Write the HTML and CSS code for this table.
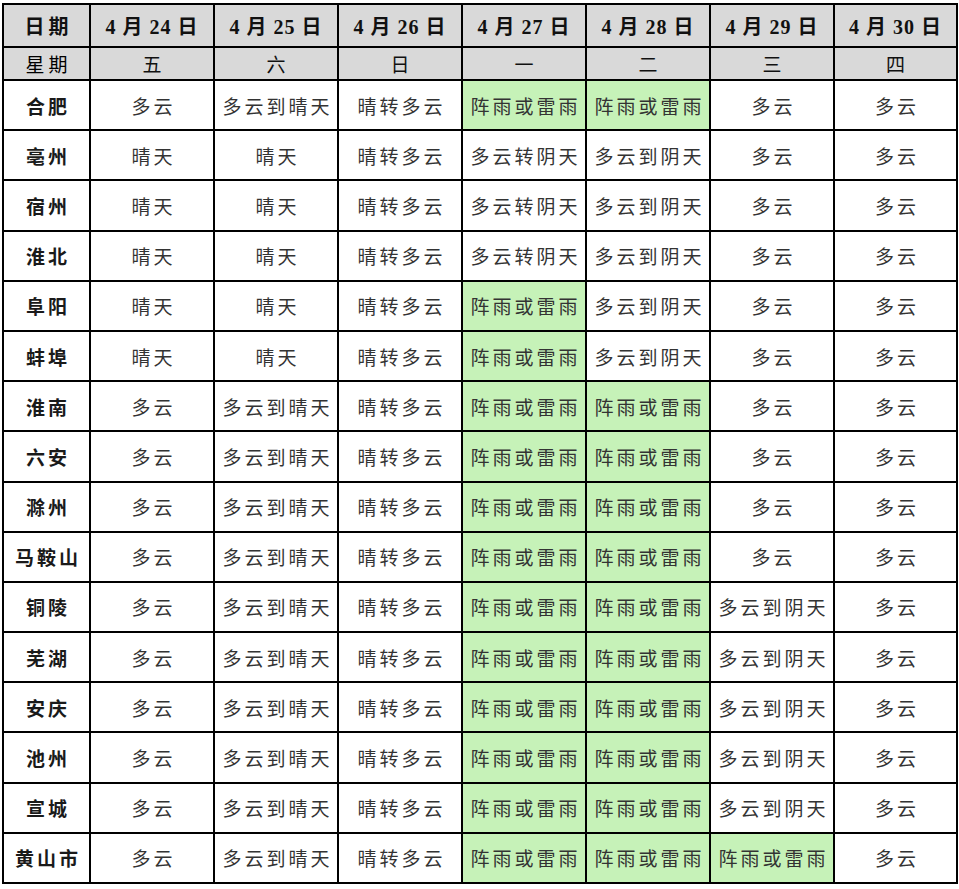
FILE: index.html
```html
<!DOCTYPE html>
<html lang="zh-CN">
<head>
<meta charset="utf-8">
<link rel="stylesheet" href="styles.css">
</head>
<body>
<table class="wx">
<colgroup>
<col class="c-city"><col class="c-day"><col class="c-day"><col class="c-day"><col class="c-day"><col class="c-day"><col class="c-day"><col class="c-last">
</colgroup>
<thead>
<tr class="h1"><th>日期</th><th>4 月 24 日</th><th>4 月 25 日</th><th>4 月 26 日</th><th>4 月 27 日</th><th>4 月 28 日</th><th>4 月 29 日</th><th>4 月 30 日</th></tr>
<tr class="h2"><th>星期</th><th>五</th><th>六</th><th>日</th><th>一</th><th>二</th><th>三</th><th>四</th></tr>
</thead>
<tbody>
<tr><th>合肥</th><td>多云</td><td>多云到晴天</td><td>晴转多云</td><td class="g">阵雨或雷雨</td><td class="g">阵雨或雷雨</td><td>多云</td><td>多云</td></tr>
<tr><th>亳州</th><td>晴天</td><td>晴天</td><td>晴转多云</td><td>多云转阴天</td><td>多云到阴天</td><td>多云</td><td>多云</td></tr>
<tr><th>宿州</th><td>晴天</td><td>晴天</td><td>晴转多云</td><td>多云转阴天</td><td>多云到阴天</td><td>多云</td><td>多云</td></tr>
<tr><th>淮北</th><td>晴天</td><td>晴天</td><td>晴转多云</td><td>多云转阴天</td><td>多云到阴天</td><td>多云</td><td>多云</td></tr>
<tr><th>阜阳</th><td>晴天</td><td>晴天</td><td>晴转多云</td><td class="g">阵雨或雷雨</td><td>多云到阴天</td><td>多云</td><td>多云</td></tr>
<tr><th>蚌埠</th><td>晴天</td><td>晴天</td><td>晴转多云</td><td class="g">阵雨或雷雨</td><td>多云到阴天</td><td>多云</td><td>多云</td></tr>
<tr><th>淮南</th><td>多云</td><td>多云到晴天</td><td>晴转多云</td><td class="g">阵雨或雷雨</td><td class="g">阵雨或雷雨</td><td>多云</td><td>多云</td></tr>
<tr><th>六安</th><td>多云</td><td>多云到晴天</td><td>晴转多云</td><td class="g">阵雨或雷雨</td><td class="g">阵雨或雷雨</td><td>多云</td><td>多云</td></tr>
<tr><th>滁州</th><td>多云</td><td>多云到晴天</td><td>晴转多云</td><td class="g">阵雨或雷雨</td><td class="g">阵雨或雷雨</td><td>多云</td><td>多云</td></tr>
<tr><th>马鞍山</th><td>多云</td><td>多云到晴天</td><td>晴转多云</td><td class="g">阵雨或雷雨</td><td class="g">阵雨或雷雨</td><td>多云</td><td>多云</td></tr>
<tr><th>铜陵</th><td>多云</td><td>多云到晴天</td><td>晴转多云</td><td class="g">阵雨或雷雨</td><td class="g">阵雨或雷雨</td><td>多云到阴天</td><td>多云</td></tr>
<tr><th>芜湖</th><td>多云</td><td>多云到晴天</td><td>晴转多云</td><td class="g">阵雨或雷雨</td><td class="g">阵雨或雷雨</td><td>多云到阴天</td><td>多云</td></tr>
<tr><th>安庆</th><td>多云</td><td>多云到晴天</td><td>晴转多云</td><td class="g">阵雨或雷雨</td><td class="g">阵雨或雷雨</td><td>多云到阴天</td><td>多云</td></tr>
<tr><th>池州</th><td>多云</td><td>多云到晴天</td><td>晴转多云</td><td class="g">阵雨或雷雨</td><td class="g">阵雨或雷雨</td><td>多云到阴天</td><td>多云</td></tr>
<tr><th>宣城</th><td>多云</td><td>多云到晴天</td><td>晴转多云</td><td class="g">阵雨或雷雨</td><td class="g">阵雨或雷雨</td><td>多云到阴天</td><td>多云</td></tr>
<tr><th>黄山市</th><td>多云</td><td>多云到晴天</td><td>晴转多云</td><td class="g">阵雨或雷雨</td><td class="g">阵雨或雷雨</td><td class="g">阵雨或雷雨</td><td>多云</td></tr>
</tbody>
</table>
</body>
</html>
```

FILE: styles.css
```css
html, body {
  margin: 0;
  padding: 0;
  background: #ffffff;
}
body {
  padding: 3px 0 0 2px;
  font-family: "Liberation Serif", "Noto Sans CJK SC", serif;
}
.wx {
  border-collapse: collapse;
  table-layout: fixed;
  width: 954px;
}
.c-city { width: 87px; }
.c-day { width: 124px; }
.c-last { width: 123px; }
.wx th, .wx td {
  border: 2px solid #000;
  padding: 0;
  text-align: center;
  vertical-align: middle;
  white-space: nowrap;
  overflow: hidden;
}
.wx thead th {
  background: #d9d9d9;
  color: #111;
}
.h1 th {
  height: 41px;
  font-size: 20px;
  font-weight: bold;
  letter-spacing: 1px;
  font-family: "Liberation Serif", "Noto Sans CJK SC", serif;
}
.h1 th:first-child,
.h2 th:first-child {
  letter-spacing: 4px;
  padding-left: 4px;
  font-family: "Noto Sans CJK SC", sans-serif;
}
.h2 th {
  height: 31px;
  font-size: 19px;
  font-weight: normal;
  font-family: "Noto Sans CJK SC", sans-serif;
}
.h2 th:first-child { color: #000; }
.h1 th:first-child { font-weight: bold; }
.wx tbody th {
  height: 48.2px;
  font-size: 19px;
  font-weight: bold;
  letter-spacing: 3px;
  padding-left: 3px;
  color: #1a1a1a;
  font-family: "Noto Sans CJK SC", sans-serif;
}
.wx tbody td {
  height: 48.2px;
  font-size: 19px;
  font-weight: normal;
  letter-spacing: 3px;
  padding-left: 3px;
  color: #333;
  font-family: "Noto Sans CJK SC", sans-serif;
}
.wx tbody td.g {
  background: #c6f2b8;
}
```
